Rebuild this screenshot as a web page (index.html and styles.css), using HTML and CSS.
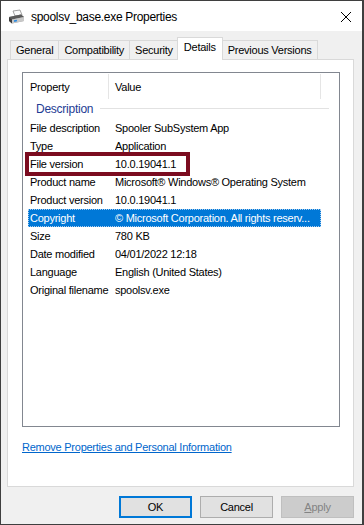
FILE: index.html
```html
<!DOCTYPE html>
<html lang="en">
<head>
    <meta charset="UTF-8">
    <title>spoolsv_base.exe Properties</title>
    <link rel="stylesheet" href="styles.css">
</head>
<body>
    <div class="window">
        <div class="titlebar">
            <svg class="app-icon" width="17" height="16" viewBox="0 0 17 16">
                <path d="M5 2 L12 1 L14 6 L7 7 Z" fill="#fafafa" stroke="#8a8a8a" stroke-width="0.8"/>
                <path d="M1 8 L13 5.5 L16 8 L16 12 L4 14.5 L1 12 Z" fill="#9b9b9b"/>
                <path d="M1 8 L13 5.5 L16 8 L4 10.5 Z" fill="#5a5a5a"/>
                <path d="M4 10.5 L16 8 L16 12 L4 14.5 Z" fill="#c8c8c8"/>
                <path d="M1 8 L4 10.5 L4 14.5 L1 12 Z" fill="#3c3c3c"/>
                <rect x="6" y="11" width="3" height="1.6" fill="#2a8ae0" transform="rotate(-12 7.5 11.8)"/>
            </svg>
            <span class="title">spoolsv_base.exe Properties</span>
            <svg class="close-btn" width="12" height="12" viewBox="0 0 12 12">
                <path d="M1 1 L11 11 M11 1 L1 11" stroke="#000" stroke-width="1"/>
            </svg>
        </div>

        <div class="content">
            <div class="tabs">
                <div class="tab">General</div>
                <div class="tab">Compatibility</div>
                <div class="tab">Security</div>
                <div class="tab active">Details</div>
                <div class="tab">Previous Versions</div>
            </div>

            <div class="panel">
                <div class="listview">
                    <div class="lv-header">
                        <div class="hcol hcol-prop">Property</div>
                        <div class="hcol hcol-val">Value</div>
                    </div>
                    <div class="group">
                        <span class="group-label">Description</span>
                        <span class="group-line"></span>
                    </div>
                    <div class="row"><span class="prop">File description</span><span class="val">Spooler SubSystem App</span></div>
                    <div class="row"><span class="prop">Type</span><span class="val">Application</span></div>
                    <div class="row marked">
                        <span class="prop">File version</span><span class="val">10.0.19041.1</span>
                        <span class="mark-box"></span>
                    </div>
                    <div class="row"><span class="prop">Product name</span><span class="val">Microsoft® Windows® Operating System</span></div>
                    <div class="row"><span class="prop">Product version</span><span class="val">10.0.19041.1</span></div>
                    <div class="row selected"><span class="prop">Copyright</span><span class="val">© Microsoft Corporation. All rights reserv...</span></div>
                    <div class="row"><span class="prop">Size</span><span class="val">780 KB</span></div>
                    <div class="row"><span class="prop">Date modified</span><span class="val">04/01/2022 12:18</span></div>
                    <div class="row"><span class="prop">Language</span><span class="val">English (United States)</span></div>
                    <div class="row"><span class="prop">Original filename</span><span class="val">spoolsv.exe</span></div>
                </div>

                <a href="#" class="remove-link">Remove Properties and Personal Information</a>
            </div>

            <div class="buttons">
                <button class="btn btn-default">OK</button>
                <button class="btn">Cancel</button>
                <button class="btn btn-disabled"><u>A</u>pply</button>
            </div>
        </div>
    </div>
</body>
</html>
```

FILE: styles.css
```css
* {
    margin: 0;
    padding: 0;
    box-sizing: border-box;
}

body {
    background: #2b2b2b;
    font-family: "Liberation Sans", Arial, sans-serif;
    font-size: 11px;
    letter-spacing: -0.25px;
    color: #000;
}

.window {
    width: 364px;
    height: 525px;
    border: 1px solid #3f3f3f;
    border-right-width: 2px;
    background: #f0f0f0;
    display: flex;
    flex-direction: column;
}

.titlebar {
    height: 30px;
    background: #fff;
    display: flex;
    align-items: center;
    padding-left: 7px;
    padding-right: 10px;
}

.app-icon {
    margin-right: 6px;
    margin-top: 1px;
}

.title {
    font-size: 12px;
    letter-spacing: -0.3px;
    flex: 1;
    margin-top: 1px;
}

.close-btn {
    margin-top: 1px;
}

.content {
    flex: 1;
    display: flex;
    flex-direction: column;
    padding-top: 6px;
}

/* tabs */
.tabs {
    display: flex;
    align-items: flex-end;
    height: 22px;
    padding-left: 9px;
    position: relative;
    z-index: 1;
}

.tab {
    height: 19px;
    padding: 0 5px;
    border: 1px solid #d9d9d9;
    border-bottom: none;
    margin-right: -1px;
    background: #f0f0f0;
    display: flex;
    align-items: center;
    line-height: 1;
}

.tab.active {
    height: 23px;
    background: #fff;
    margin-left: -1px;
    margin-bottom: -1px;
    padding: 0 6px 3px;
    position: relative;
    z-index: 2;
}

.panel {
    margin: 0 8px 0 6px;
    height: 428px;
    background: #fff;
    border: 1px solid #d9d9d9;
    padding: 12px 0 0 14px;
}

/* list view */
.listview {
    width: 318px;
    height: 355px;
    border: 1px solid #828790;
}

.lv-header {
    display: flex;
    height: 25px;
}

.hcol {
    display: flex;
    align-items: center;
}

.hcol-prop {
    width: 86px;
    padding-left: 7px;
    border-right: 1px solid #e5e5e5;
    margin: 1px 0 -1px;
}

.hcol-val {
    width: 212px;
    padding-left: 6px;
    border-right: 1px solid #e5e5e5;
    margin: 1px 0 -1px;
}

.group {
    height: 21px;
    display: flex;
    align-items: center;
    padding-left: 13px;
    padding-right: 10px;
}

.group-label {
    color: #1e3c94;
    font-size: 12px;
}

.group-line {
    flex: 1;
    height: 1px;
    margin-left: 7px;
    background: #e2e2e2;
}

.row {
    position: relative;
    display: flex;
    align-items: center;
    height: 18px;
    width: 293px;
    margin-left: 5px;
    white-space: nowrap;
    border: 1px solid transparent;
}

.prop {
    width: 86px;
    padding-left: 1px;
}

.val {
    flex: 1;
    overflow: hidden;
}

.row.selected {
    background: #0078d7;
    color: #fff;
    border: 1px dotted #a8cdf0;
}

.mark-box {
    position: absolute;
    left: -4px;
    top: -4px;
    width: 165px;
    height: 24px;
    border: 4px solid #7b0c20;
}

.remove-link {
    display: inline-block;
    margin-top: 14px;
    color: #0066cc;
    text-decoration: underline;
}

/* buttons */
.buttons {
    display: flex;
    justify-content: flex-end;
    gap: 8px;
    padding: 9px 8px 0 0;
}

.btn {
    width: 73px;
    height: 22px;
    background: #e1e1e1;
    border: 1px solid #adadad;
    font-family: inherit;
    font-size: 11px;
    letter-spacing: inherit;
    color: #000;
}

.btn-default {
    border: 2px solid #0078d7;
}

.btn-disabled {
    background: #cccccc;
    border-color: #bfbfbf;
    color: #838383;
}

.btn-disabled u {
    text-decoration: underline;
}
```
